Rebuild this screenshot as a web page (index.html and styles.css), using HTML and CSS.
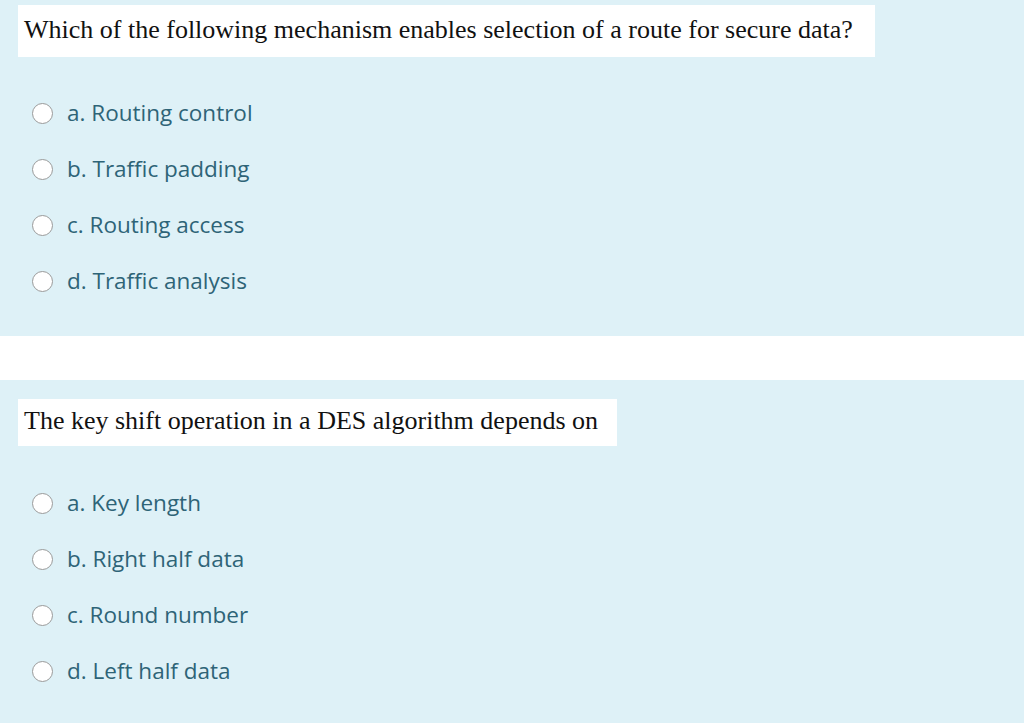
FILE: index.html
```html
<!DOCTYPE html>
<html>
<head>
<meta charset="utf-8">
<link rel="stylesheet" href="styles.css">
</head>
<body>
<div class="que q1">
  <div class="qtext qtext-1">Which of the following mechanism enables selection of a route for secure data?</div>
  <div class="answers">
    <label class="opt"><span class="radio"></span><span class="label">a. Routing control</span></label>
    <label class="opt"><span class="radio"></span><span class="label">b. Traffic padding</span></label>
    <label class="opt"><span class="radio"></span><span class="label">c. Routing access</span></label>
    <label class="opt"><span class="radio"></span><span class="label">d. Traffic analysis</span></label>
  </div>
</div>
<div class="spacer"></div>
<div class="que q2">
  <div class="qtext qtext-2">The key shift operation in a DES algorithm depends on</div>
  <div class="answers">
    <label class="opt"><span class="radio"></span><span class="label">a. Key length</span></label>
    <label class="opt"><span class="radio"></span><span class="label">b. Right half data</span></label>
    <label class="opt"><span class="radio"></span><span class="label">c. Round number</span></label>
    <label class="opt"><span class="radio"></span><span class="label">d. Left half data</span></label>
  </div>
</div>
</body>
</html>
```
FILE: styles.css
```css
html, body {
  margin: 0;
  padding: 0;
  background: #ffffff;
}
body {
  width: 1024px;
  height: 723px;
  overflow: hidden;
}
.que {
  background: #def1f7;
  display: flex;
  flex-direction: column;
  align-items: flex-start;
}
.q1 {
  padding: 5px 0 27px 0;
}
.q2 {
  padding: 19px 0 40px 0;
}
.spacer {
  height: 44px;
}
.qtext {
  background: #ffffff;
  margin-left: 18px;
  font-family: "Liberation Serif", "Times New Roman", serif;
  font-size: 26px;
  color: #111111;
  display: flex;
  align-items: center;
  box-sizing: border-box;
  padding-bottom: 3px;
}
.qtext-1 {
  height: 52px;
  width: 857px;
  padding-left: 6px;
}
.qtext-2 {
  height: 47px;
  width: 599px;
  padding-left: 6px;
}
.answers {
  margin-top: 28px;
  display: flex;
  flex-direction: column;
}
.q2 .answers {
  margin-top: 29px;
}
.opt {
  height: 56px;
  display: flex;
  align-items: center;
}
.radio {
  width: 19px;
  height: 19px;
  border-radius: 50%;
  border: 1px solid #9a9a9a;
  background: #ffffff;
  margin-left: 32px;
  margin-right: 14px;
  flex: none;
}
.label {
  font-family: "Open Sans", "Noto Sans", sans-serif;
  font-size: 22.5px;
  color: #2e6477;
  padding-bottom: 2px;
}
```
